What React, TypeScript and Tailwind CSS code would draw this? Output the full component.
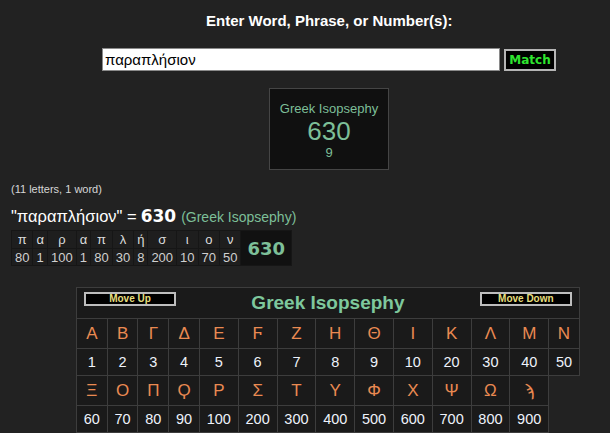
import React from 'react';

const letters = [
  ['Α', 1], ['Β', 2], ['Γ', 3], ['Δ', 4], ['Ε', 5], ['Ϝ', 6], ['Ζ', 7],
  ['Η', 8], ['Θ', 9], ['Ι', 10], ['Κ', 20], ['Λ', 30], ['Μ', 40], ['Ν', 50],
  ['Ξ', 60], ['Ο', 70], ['Π', 80], ['Ϙ', 90], ['Ρ', 100], ['Σ', 200], ['Τ', 300],
  ['Υ', 400], ['Φ', 500], ['Χ', 600], ['Ψ', 700], ['Ω', 800], ['ϡ', 900],
] as const;

const breakdown = [
  ['π', 80], ['α', 1], ['ρ', 100], ['α', 1], ['π', 80], ['λ', 30],
  ['ή', 8], ['σ', 200], ['ι', 10], ['ο', 70], ['ν', 50],
] as const;

function CipherButton({ label }: { label: string }) {
  return (
    <button
      type="button"
      className="w-[92px] h-[14px] border-2 border-[#bdbdbd] bg-black text-[10px] leading-[10px] font-bold text-[#e6de7c]"
    >
      {label}
    </button>
  );
}

export default function App() {
  const firstRow = letters.slice(0, 14);
  const secondRow = letters.slice(14);

  return (
    <div className="w-[610px] h-[433px] overflow-hidden bg-[#222222] text-white font-['Liberation_Sans',Arial,sans-serif]">
      {/* Search */}
      <div className="pt-[12px] ml-[206px] text-[15px] leading-[18px] font-bold text-white">
        Enter Word, Phrase, or Number(s):
      </div>
      <div className="mt-[18px] ml-[102px] flex items-center gap-[4px]">
        <input
          readOnly
          value="παραπλήσιον"
          className="w-[398px] h-[23px] bg-white border border-[#8a8a8a] px-[2px] text-[15px] text-black outline-none font-['Liberation_Sans',Arial,sans-serif]"
        />
        <button
          type="button"
          className="w-[52px] h-[22px] border-2 border-[#b5b5b5] bg-black text-[12px] font-bold text-[#2fe52f] font-['DejaVu_Sans',Verdana,sans-serif]"
        >
          Match
        </button>
      </div>

      {/* Score box */}
      <div className="mt-[17px] ml-[269px] w-[120px] h-[82px] bg-[#101010] border border-[#454545] flex flex-col items-center pt-[12px] text-[#7dbf98]">
        <div className="text-[13px] leading-[15px]">Greek Isopsephy</div>
        <div className="text-[26px] leading-[28px] mt-[1px]">630</div>
        <div className="text-[13px] leading-[15px]">9</div>
      </div>

      {/* Summary */}
      <div className="mt-[13px] ml-[11px] text-[11px] leading-[13px] text-[#d6d6d6]">
        (11 letters, 1 word)
      </div>
      <div className="mt-[10px] ml-[11px] flex items-baseline leading-[20px]">
        <span className="text-[16.5px] text-white">"παραπλήσιον" = </span>
        <span className="ml-[4px] text-[17px] font-bold text-white font-['DejaVu_Sans',Verdana,sans-serif]">630</span>
        <span className="ml-[5px] text-[14px] text-[#7dbf98]">(Greek Isopsephy)</span>
      </div>

      {/* Letter breakdown */}
      <table className="mt-[3px] ml-[11px] border-separate border-spacing-[1px] bg-[#161616] text-[13px]">
        <tbody>
          <tr>
            {breakdown.map(([ch], i) => (
              <td key={i} className="h-[17px] px-[3px] text-center leading-[15px] bg-[#1e1e1e] text-[#dcdcdc]">
                {ch}
              </td>
            ))}
            <td
              rowSpan={2}
              className="px-[6px] bg-[#111111] text-[18px] font-bold text-[#7dbf98] font-['DejaVu_Sans',Verdana,sans-serif]"
            >
              630
            </td>
          </tr>
          <tr>
            {breakdown.map(([, v], i) => (
              <td key={i} className="h-[16px] px-[3px] text-center leading-[15px] bg-[#1e1e1e] text-[#d0d0d0]">
                {v}
              </td>
            ))}
          </tr>
        </tbody>
      </table>

      {/* Cipher chart */}
      <table className="mt-[21px] ml-[76px] border-collapse">
        <tbody>
          <tr>
            <td colSpan={14} className="h-[31px] p-0 border border-[#3d3d3d] bg-[#1a1a1a] align-top">
              <div className="flex items-start justify-between px-[7px] pt-[4px]">
                <CipherButton label="Move Up" />
                <span className="text-[19px] leading-[22px] font-bold text-[#7ec89d]">Greek Isopsephy</span>
                <CipherButton label="Move Down" />
              </div>
            </td>
          </tr>
          {[firstRow, secondRow].map((row, r) => (
            <React.Fragment key={r}>
              <tr>
                {row.map(([ch], i) => (
                  <td
                    key={i}
                    className="h-[30px] px-[6.8px] text-center border border-[#3d3d3d] bg-[#1a1a1a] text-[17px] leading-[20px] text-[#ea8a52]"
                  >
                    {ch}
                  </td>
                ))}
              </tr>
              <tr>
                {row.map(([, v], i) => (
                  <td
                    key={i}
                    className="h-[27px] px-[6.8px] text-center border border-[#3d3d3d] bg-[#1a1a1a] text-[14.5px] leading-[17px] text-[#eef2fa]"
                  >
                    {v}
                  </td>
                ))}
              </tr>
            </React.Fragment>
          ))}
        </tbody>
      </table>
    </div>
  );
}
